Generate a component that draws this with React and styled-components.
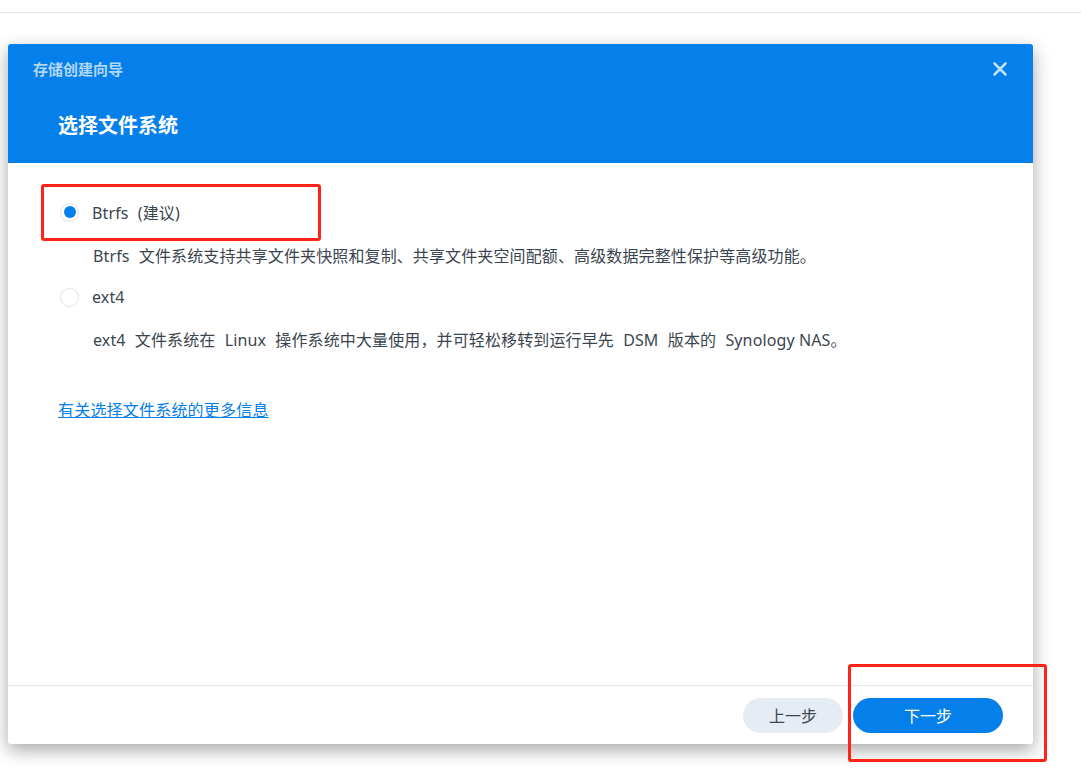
import styled, { createGlobalStyle } from "styled-components";

const GlobalStyle = createGlobalStyle`
  body {
    margin: 0;
    background: #ffffff;
    font-family: "Noto Sans", "Noto Sans CJK SC", sans-serif;
    color: #3b4550;
  }
`;

const Page = styled.div`
  position: relative;
  width: 1081px;
  height: 776px;
  overflow: hidden;
`;

const TopBar = styled.div`
  height: 12px;
  border-bottom: 1px solid #e3e8ee;
`;

const Dialog = styled.div`
  margin: 31px 0 0 8px;
  width: 1025px;
  height: 700px;
  display: flex;
  flex-direction: column;
  background: #fff;
  border-radius: 3px;
  overflow: hidden;
  box-shadow: 0 6px 18px rgba(0, 0, 0, 0.35);
`;

const Header = styled.div`
  height: 119px;
  flex-shrink: 0;
  background: #0580eb;
  display: flex;
  flex-direction: column;
  padding: 0 25px;
  box-sizing: border-box;
`;

const HeaderTop = styled.div`
  display: flex;
  align-items: center;
  justify-content: space-between;
  height: 48px;
`;

const WizardName = styled.div`
  font-size: 15px;
  font-weight: 700;
  color: rgba(255, 255, 255, 0.7);
`;

const Close = styled.button`
  border: 0;
  background: none;
  padding: 0;
  width: 16px;
  height: 16px;
  margin-top: 2px;
  display: flex;
  cursor: pointer;
`;

const Heading = styled.h2`
  margin: 22px 0 0 25px;
  font-size: 20px;
  font-weight: 700;
  color: #fff;
  line-height: 24px;
`;

const Body = styled.div`
  flex: 1;
  padding: 37px 52px 0;
  font-size: 16px;
  letter-spacing: 0.12px;
  word-spacing: 5px;
`;

const Option = styled.label`
  display: flex;
  align-items: center;
  gap: 13px;
  height: 24px;
  margin-top: ${(p) => p.$top}px;
  cursor: pointer;
`;

const Radio = styled.span`
  width: 17px;
  height: 17px;
  border-radius: 50%;
  border: 1.5px solid #dbe3ec;
  background: #fff;
  display: flex;
  align-items: center;
  justify-content: center;
  &::after {
    content: "";
    width: 12px;
    height: 12px;
    border-radius: 50%;
    background: ${(p) => (p.$checked ? "#0580eb" : "transparent")};
  }
`;

const Desc = styled.p`
  margin: ${(p) => p.$top}px 0 0 33px;
  line-height: 24px;
`;

const Term = styled.span`
  word-spacing: normal;
`;

const MoreLink = styled.a`
  display: inline-block;
  margin-top: 46px;
  margin-left: -2px;
  letter-spacing: 0.2px;
  line-height: 24px;
  color: #0580eb;
  text-decoration: underline;
`;

const Footer = styled.div`
  height: 59px;
  flex-shrink: 0;
  border-top: 1px solid #e5e5e5;
  box-sizing: border-box;
  display: flex;
  align-items: center;
  justify-content: flex-end;
  gap: 10px;
  padding: 0 30px;
`;

const Button = styled.button`
  height: 35px;
  width: ${(p) => (p.$primary ? 150 : 100)}px;
  border: 0;
  border-radius: 18px;
  font-family: "Noto Sans", "Noto Sans CJK SC", sans-serif;
  font-size: 16px;
  background: ${(p) => (p.$primary ? "#0580eb" : "#e6ecf3")};
  color: ${(p) => (p.$primary ? "#fff" : "#3b4550")};
  cursor: pointer;
`;

const Marker = styled.div`
  position: absolute;
  left: ${(p) => p.$x}px;
  top: ${(p) => p.$y}px;
  width: ${(p) => p.$w}px;
  height: ${(p) => p.$h}px;
  box-sizing: border-box;
  border: 3px solid #ff2318;
  border-radius: 3px;
  pointer-events: none;
`;

export default function App() {
  return (
    <Page>
      <GlobalStyle />
      <TopBar />
      <Dialog>
        <Header>
          <HeaderTop>
            <WizardName>存储创建向导</WizardName>
            <Close aria-label="close">
              <svg width="16" height="16" viewBox="0 0 16 16">
                <path
                  d="M2.5 2.5 L13.5 13.5 M13.5 2.5 L2.5 13.5"
                  stroke="rgba(255,255,255,0.75)"
                  strokeWidth="2.6"
                  strokeLinecap="round"
                />
              </svg>
            </Close>
          </HeaderTop>
          <Heading>选择文件系统</Heading>
        </Header>
        <Body>
          <Option $top={0}>
            <Radio $checked />
            Btrfs (建议)
          </Option>
          <Desc $top={20}>
            Btrfs 文件系统支持共享文件夹快照和复制、共享文件夹空间配额、高级数据完整性保护等高级功能。
          </Desc>
          <Option $top={17}>
            <Radio />
            ext4
          </Option>
          <Desc $top={19}>
            ext4 文件系统在 Linux 操作系统中大量使用，并可轻松移转到运行早先 DSM 版本的{" "}
            <Term>Synology NAS</Term>。
          </Desc>
          <MoreLink href="#">有关选择文件系统的更多信息</MoreLink>
        </Body>
        <Footer>
          <Button>上一步</Button>
          <Button $primary>下一步</Button>
        </Footer>
      </Dialog>
      <Marker $x={41} $y={184} $w={280} $h={57} />
      <Marker $x={848} $y={664} $w={199} $h={98} />
    </Page>
  );
}
